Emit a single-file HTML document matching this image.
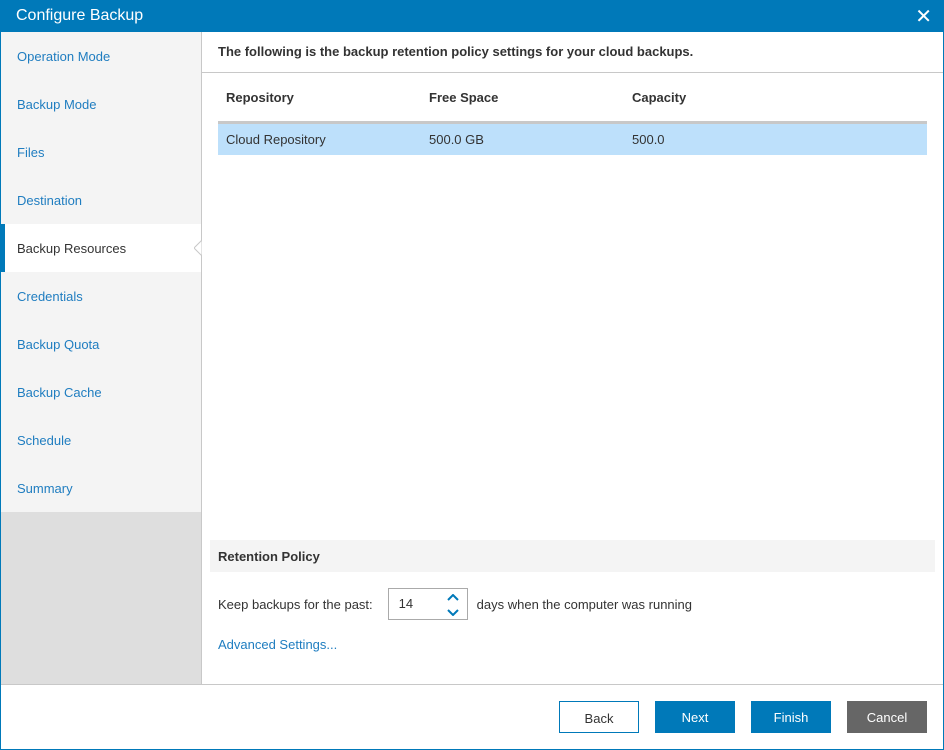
<!DOCTYPE html>
<html><head><style>
*{margin:0;padding:0;box-sizing:border-box}
body{width:944px;height:750px;font-family:"Liberation Sans","DejaVu Sans",sans-serif;font-size:13px;color:#333;background:#fff;position:relative;overflow:hidden}
.win{position:absolute;left:0;top:0;width:944px;height:750px;border:1px solid #0079b9}
.title{position:absolute;left:0;top:0;width:944px;height:32px;background:#0079b9;color:#fff;font-size:16px;padding:7px 0 0 16px}
.x{position:absolute;right:12px;top:4px;font-size:20px;color:#fff}
.side{position:absolute;left:1px;top:32px;width:201px;height:652px;background:#dedede;border-right:1px solid #c8c8c8}
.side .list{background:#f4f4f4;height:480px}
.it{height:48px;line-height:49px;padding-left:16px;color:#1f7dc0;font-size:13px}
.it.sel{background:#fff;color:#333;border-left:4px solid #0079b9;padding-left:12px;position:relative}
.main{position:absolute;left:202px;top:32px;right:1px;height:652px}
.hd{height:41px;border-bottom:1px solid #c8c8c8;font-weight:bold;padding:12px 0 0 16px}
table{position:absolute;left:16px;top:50px;width:709px;border-collapse:collapse}
th{text-align:left;font-weight:bold;height:40px;padding-left:8px;border-bottom:3px solid #c8c8c8;vertical-align:top;padding-top:8px}
td{height:33px;padding-left:8px;background:#bde0fb;padding-top:1px}
.rp{position:absolute;left:8px;top:508px;width:725px;height:32px;background:#f4f4f4;font-weight:bold;padding:9px 0 0 8px}
.keep{position:absolute;left:16px;top:556px;height:32px;display:flex;align-items:center}
.sp{width:80px;height:32px;border:1px solid #aaa;margin:0 9px 0 15px;padding:0 10px;line-height:30px;position:relative}
.adv{position:absolute;left:16px;top:605px;color:#1f7dc0}
.foot{position:absolute;left:1px;top:684px;width:942px;height:65px;border-top:1px solid #c8c8c8}
.b{position:absolute;top:16px;width:80px;height:32px;line-height:33px;text-align:center;color:#fff;background:#0079b9}
</style></head><body>
<div class="win"></div>
<div class="title">Configure Backup<span class="x">✕</span></div>
<div class="side"><div class="list">
<div class="it">Operation Mode</div><div class="it">Backup Mode</div><div class="it">Files</div><div class="it">Destination</div>
<div class="it sel">Backup Resources<svg style="position:absolute;right:-1px;top:16px" width="8" height="16"><path d="M8 0L0 8 8 16Z" fill="#fff" stroke="#c8c8c8"/></svg></div>
<div class="it">Credentials</div><div class="it">Backup Quota</div><div class="it">Backup Cache</div><div class="it">Schedule</div><div class="it">Summary</div>
</div></div>
<div class="main">
<div class="hd">The following is the backup retention policy settings for your cloud backups.</div>
<table><tr><th style="width:203px">Repository</th><th style="width:203px">Free Space</th><th>Capacity</th></tr>
<tr><td>Cloud Repository</td><td>500.0 GB</td><td>500.0</td></tr></table>
<div class="rp">Retention Policy</div>
<div class="keep">Keep backups for the past:<div class="sp">14<svg style="position:absolute;right:8px;top:5px" width="12" height="22"><path d="M1 6l5-5 5 5M1 16l5 5 5-5" fill="none" stroke="#0079b9" stroke-width="2"/></svg></div>days when the computer was running</div>
<div class="adv">Advanced Settings...</div>
</div>
<div class="foot">
<div class="b" style="left:558px;background:#fff;color:#333;border:1px solid #0079b9">Back</div>
<div class="b" style="left:654px">Next</div>
<div class="b" style="left:750px">Finish</div>
<div class="b" style="left:846px;background:#666">Cancel</div>
</div>
</body></html>
